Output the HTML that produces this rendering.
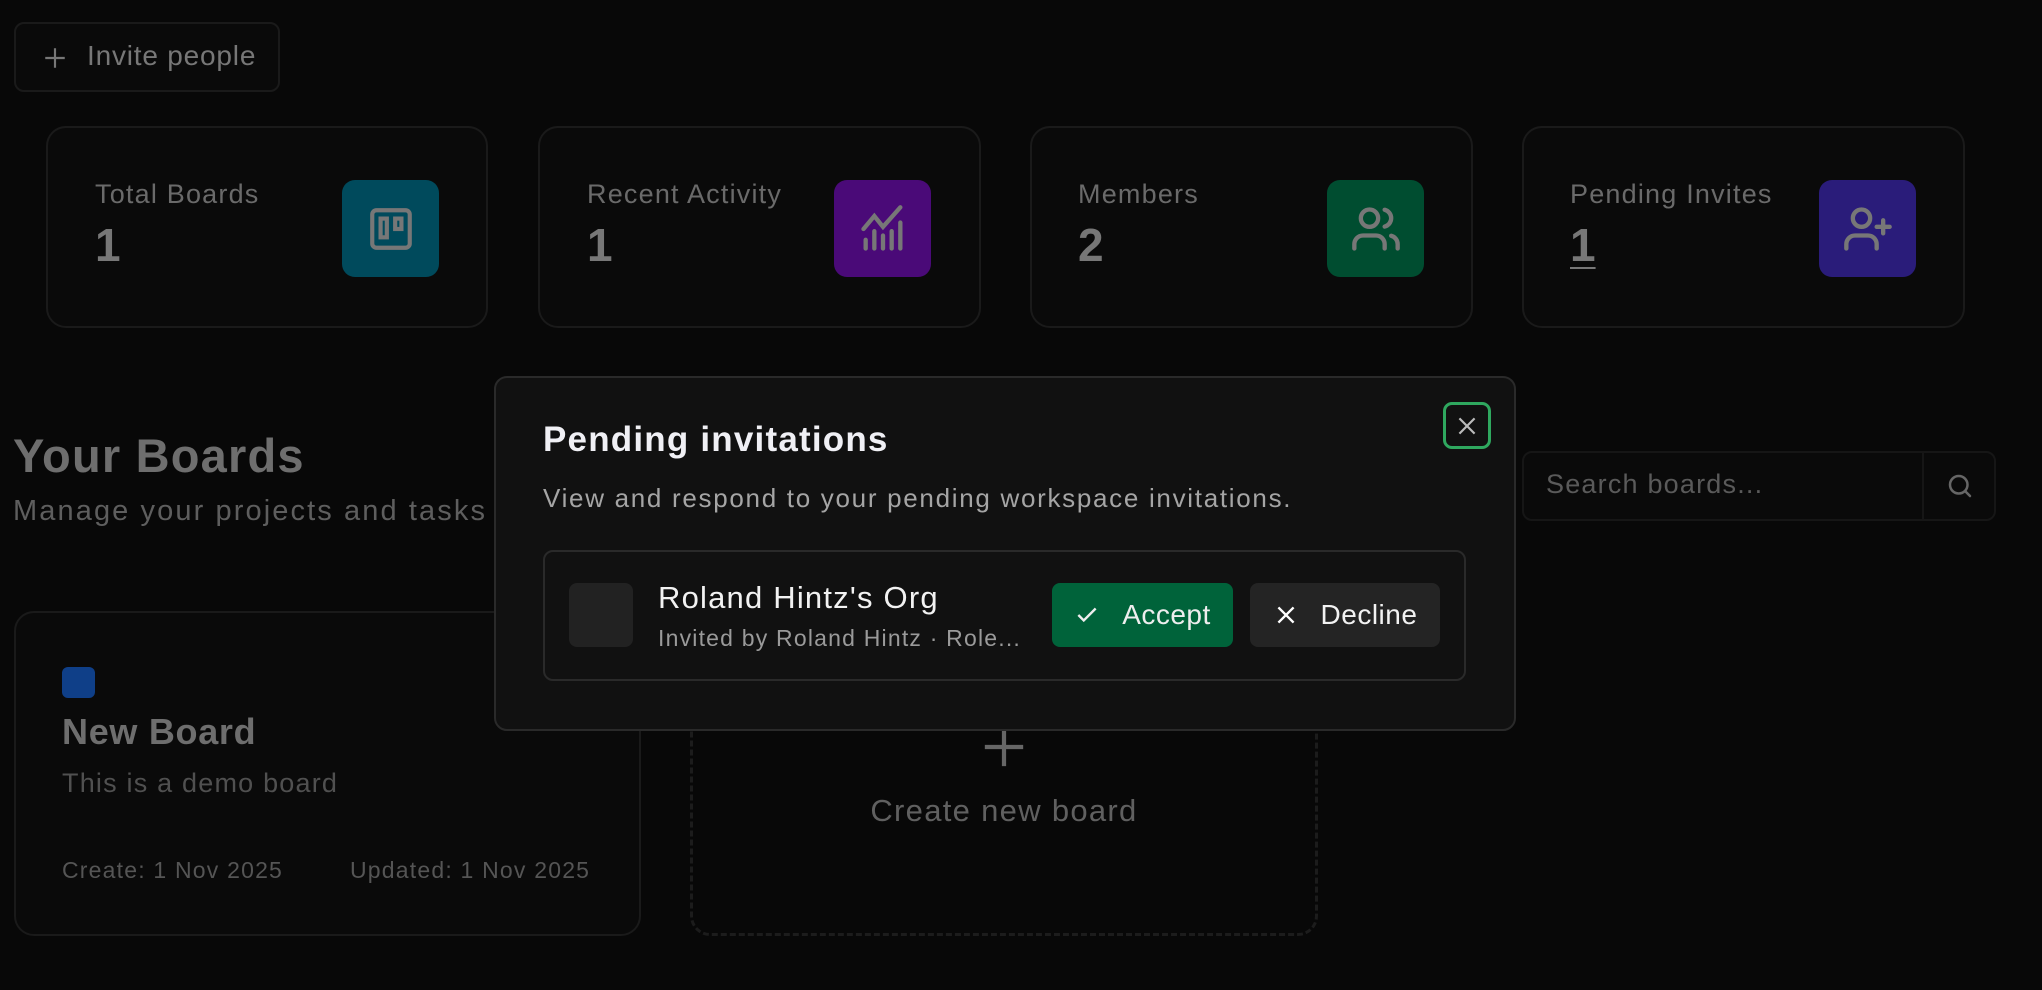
<!DOCTYPE html>
<html><head><meta charset="utf-8"><style>
*{margin:0;padding:0;box-sizing:border-box}
body{width:2042px;height:990px;background:#080808;font-family:"Liberation Sans",sans-serif;position:relative;overflow:hidden;color:#777}
.a{position:absolute}
.card{position:absolute;border:2px solid #1a1a1a;border-radius:20px;background:#0a0a0a}
.lbl{position:absolute;font-size:27px;color:#6a6a6a;white-space:nowrap;letter-spacing:1.2px}
.num{position:absolute;font-size:46px;font-weight:bold;color:#777;line-height:1}
.ic{position:absolute;width:97px;height:97px;border-radius:13px;display:flex;align-items:center;justify-content:center}
</style></head><body>

<div class="a" style="left:14px;top:22px;width:266px;height:70px;border:2px solid #1a1a1a;border-radius:10px;background:#0a0a0a"></div>
<svg class="a" style="left:42px;top:45px" width="26" height="26" viewBox="0 0 24 24" fill="none" stroke="#777" stroke-width="2"><path d="M12 3v18M3 12h18"/></svg>
<div class="a" style="left:87px;top:40px;font-size:28px;color:#777;letter-spacing:0.8px">Invite people</div>

<div class="card" style="left:46px;top:126px;width:442px;height:202px"></div>
<div class="lbl" style="left:95px;top:179px">Total Boards</div>
<div class="num" style="left:95px;top:222px">1</div>
<div class="ic" style="left:342px;top:180px;background:#004a5c"><svg width="50" height="50" viewBox="0 0 24 24" fill="none" stroke="#777" stroke-width="2"><rect x="3" y="3" width="18" height="18" rx="2"/><rect x="7" y="7" width="3" height="9"/><rect x="14" y="7" width="3" height="5"/></svg></div>

<div class="card" style="left:538px;top:126px;width:443px;height:202px"></div>
<div class="lbl" style="left:587px;top:179px">Recent Activity</div>
<div class="num" style="left:587px;top:222px">1</div>
<div class="ic" style="left:834px;top:180px;background:#4a0a78"><svg width="52" height="52" viewBox="0 0 24 24" fill="none" stroke="#777" stroke-width="2" stroke-linecap="round"><path d="M3 12l5-6 4 5 8-9"/><path d="M4 21v-4M8 21v-8M12 21v-6M16 21v-8M20 21v-12"/></svg></div>

<div class="card" style="left:1030px;top:126px;width:443px;height:202px"></div>
<div class="lbl" style="left:1078px;top:179px">Members</div>
<div class="num" style="left:1078px;top:222px">2</div>
<div class="ic" style="left:1327px;top:180px;background:#004d30"><svg width="52" height="52" viewBox="0 0 24 24" fill="none" stroke="#777" stroke-width="2" stroke-linecap="round"><path d="M16 21v-2a4 4 0 0 0-4-4H6a4 4 0 0 0-4 4v2"/><circle cx="9" cy="7" r="4"/><path d="M22 21v-2a4 4 0 0 0-3-3.87M16 3.13a4 4 0 0 1 0 7.75"/></svg></div>

<div class="card" style="left:1522px;top:126px;width:443px;height:202px"></div>
<div class="lbl" style="left:1570px;top:179px">Pending Invites</div>
<div class="num" style="left:1570px;top:222px;text-decoration:underline;text-decoration-thickness:2px;text-underline-offset:6px">1</div>
<div class="ic" style="left:1819px;top:180px;background:#2a1c7a"><svg width="52" height="52" viewBox="0 0 24 24" fill="none" stroke="#777" stroke-width="2" stroke-linecap="round"><path d="M16 21v-2a4 4 0 0 0-4-4H6a4 4 0 0 0-4 4v2"/><circle cx="9" cy="7" r="4"/><path d="M19 8v6M22 11h-6"/></svg></div>

<div class="a" style="left:13px;top:428px;font-size:47px;font-weight:bold;color:#6e6e6e;letter-spacing:1.2px">Your Boards</div>
<div class="a" style="left:13px;top:495px;font-size:29px;color:#5e5e5e;white-space:nowrap;letter-spacing:2.1px">Manage your projects and tasks</div>

<div class="a" style="left:1522px;top:451px;width:474px;height:70px;border:2px solid #161616;border-radius:10px;background:#0a0a0a"></div>
<div class="a" style="left:1922px;top:452px;width:2px;height:68px;background:#161616"></div>
<div class="a" style="left:1546px;top:469px;font-size:27px;color:#5a5a5a;letter-spacing:1.2px">Search boards...</div>
<svg class="a" style="left:1945px;top:471px" width="30" height="30" viewBox="0 0 24 24" fill="none" stroke="#666" stroke-width="2" stroke-linecap="round"><circle cx="11" cy="11" r="7"/><path d="M20 20l-4-4"/></svg>

<div class="card" style="left:14px;top:611px;width:627px;height:325px"></div>
<div class="a" style="left:62px;top:667px;width:33px;height:31px;border-radius:6px;background:#0f3f88"></div>
<div class="a" style="left:62px;top:711px;font-size:36px;font-weight:bold;color:#6e6e6e;letter-spacing:0.7px">New Board</div>
<div class="a" style="left:62px;top:768px;font-size:27px;color:#505050;letter-spacing:1.2px">This is a demo board</div>
<div class="a" style="left:62px;top:857px;font-size:23px;color:#555;letter-spacing:1.2px">Create: 1 Nov 2025</div>
<div class="a" style="left:350px;top:857px;font-size:23px;color:#555;letter-spacing:1.2px">Updated: 1 Nov 2025</div>

<div class="a" style="left:690px;top:611px;width:628px;height:325px;border:3px dashed #1c1c1c;border-radius:20px"></div>
<svg class="a" style="left:981px;top:724px" width="46" height="46" viewBox="0 0 24 24" fill="none" stroke="#666" stroke-width="2.2"><path d="M12 2v20M2 12h20"/></svg>
<div class="a" style="left:690px;top:793px;width:628px;text-align:center;font-size:31px;color:#606060;letter-spacing:1.3px">Create new board</div>

<div class="a" style="left:494px;top:376px;width:1022px;height:355px;background:#111;border:2px solid #2a2a2a;border-radius:13px"></div>
<div class="a" style="left:543px;top:420px;font-size:35px;font-weight:bold;color:#f0f0f5;letter-spacing:1.2px">Pending invitations</div>
<div class="a" style="left:543px;top:483px;font-size:26px;color:#a5a5a5;letter-spacing:1.7px;white-space:nowrap">View and respond to your pending workspace invitations.</div>
<div class="a" style="left:1443px;top:402px;width:48px;height:47px;border:3px solid #2fa85f;border-radius:9px;display:flex;align-items:center;justify-content:center"><svg width="26" height="26" viewBox="0 0 24 24" fill="none" stroke="#bbb" stroke-width="2"><path d="M5 5l14 14M19 5L5 19"/></svg></div>

<div class="a" style="left:543px;top:550px;width:923px;height:131px;border:2px solid #2a2a2a;border-radius:10px"></div>
<div class="a" style="left:569px;top:583px;width:64px;height:64px;border-radius:8px;background:#222"></div>
<div class="a" style="left:658px;top:580px;font-size:31px;color:#f2f2f2;letter-spacing:1.2px">Roland Hintz's Org</div>
<div class="a" style="left:658px;top:625px;font-size:23px;color:#9a9a9a;letter-spacing:1.2px;white-space:nowrap">Invited by Roland Hintz · Role...</div>
<div class="a" style="left:1052px;top:583px;width:181px;height:64px;border-radius:8px;background:#00633a;display:flex;align-items:center;justify-content:center;gap:22px;color:#eee;font-size:28px;letter-spacing:0.5px"><svg width="26" height="26" viewBox="0 0 24 24" fill="none" stroke="#eee" stroke-width="2.2"><path d="M4 12l5 5L20 6"/></svg>Accept</div>
<div class="a" style="left:1250px;top:583px;width:190px;height:64px;border-radius:8px;background:#242424;display:flex;align-items:center;justify-content:center;gap:22px;color:#f2f2f2;font-size:28px;letter-spacing:0.5px"><svg width="26" height="26" viewBox="0 0 24 24" fill="none" stroke="#fff" stroke-width="2.2"><path d="M5 5l14 14M19 5L5 19"/></svg>Decline</div>
</body></html>
